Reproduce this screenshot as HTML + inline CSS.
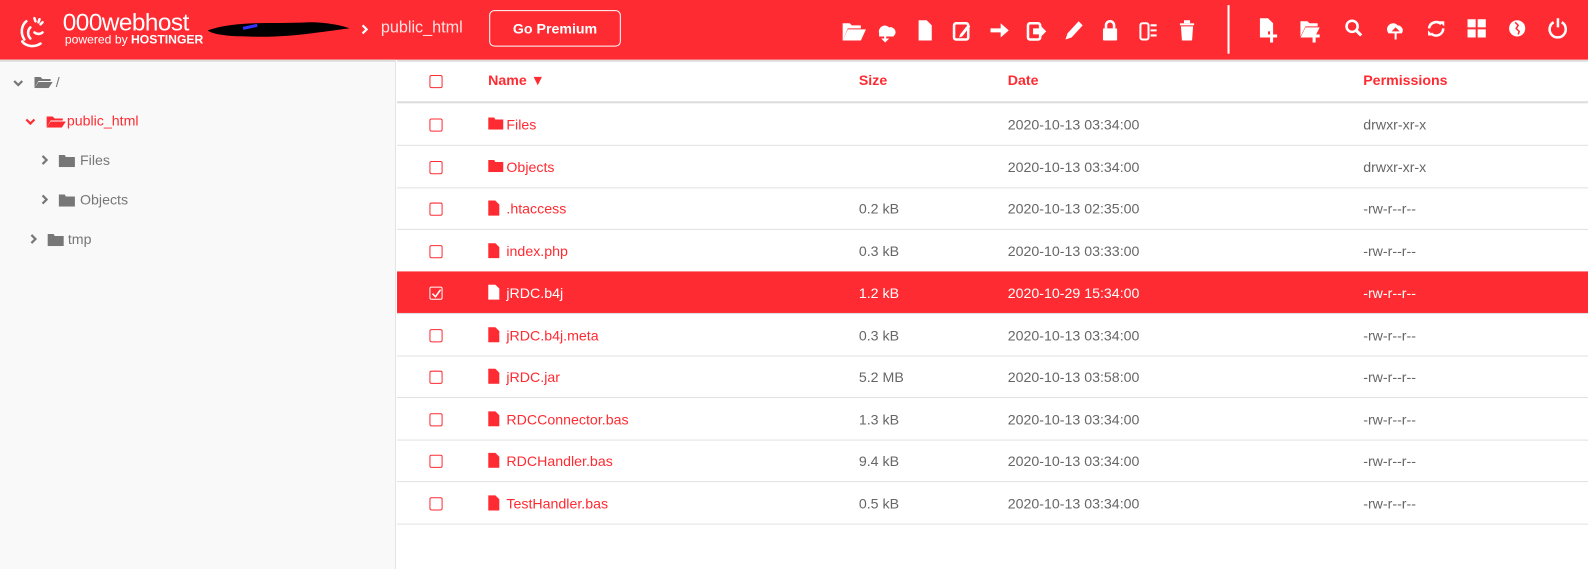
<!DOCTYPE html>
<html><head><meta charset="utf-8"><style>
*{margin:0;padding:0;box-sizing:border-box}
body{width:1588px;height:562px;overflow:hidden;background:#fff;font-family:"Liberation Sans",sans-serif;position:relative}
#w{position:absolute;left:0;top:0;width:1568px;height:555px;transform:scale(1.0128);transform-origin:0 0}
.hdr{position:absolute;left:0;top:0;width:1600px;height:59px;background:#ff2b32}
.hdr .t{position:absolute;color:#fff}
.ic{position:absolute;top:17px}
.side{position:absolute;left:0;top:59px;width:391px;height:503px;background:#f9f9f9;border-right:1px solid #e4e4e4;border-top:2px solid #ddd}
.tr{position:absolute;font-size:14px;color:#777}
.main{position:absolute;left:392px;top:59px;width:1200px;height:503px;border-top:2px solid #ddd}
.row{position:absolute;left:0;width:1200px;height:42px;border-bottom:1px solid #e2e2e2;font-size:14px;color:#666}
.row span{position:absolute;top:13px}
.cb{position:absolute;left:32px;top:15px;width:13px;height:13px;border:1px solid #ff2b32;border-radius:2px;background:#fff}
.nm{left:108px;color:#ff2b32}
.fi{position:absolute;left:90px;top:13px}
.sel{background:#ff2b32;color:#fff}
.sel span,.sel .nm{color:#fff}
.sel .cb{border-color:#fff;background:#ff2b32}
.chev{position:absolute}
</style></head><body><div id="w">
<div class="hdr">
 <svg class="ic" style="left:14px;top:13px" width="36" height="36" viewBox="0 0 36 36" fill="none" stroke="#fff" stroke-width="2.5" stroke-linecap="round"><path d="M12 8c-5 4-6 12-2 18"/><path d="M16 14c-3 3-3 8 0 11"/><path d="M8 28c4 5 12 6 18 2"/><path d="M20 19c2 2 6 2 8 0"/><path d="M20 5l1 3M25 6l-1 3M28 9l-2 2"/></svg>
 <div class="t" style="left:62px;top:9px;font-size:24px;letter-spacing:-0.5px">000webhost</div>
 <div class="t" style="left:64px;top:32px;font-size:12px">powered by <b>HOSTINGER</b></div>
 <svg style="position:absolute;left:200px;top:16px" width="150" height="28"><path d="M5 14c30-10 60-6 100-8 20 0 35 4 40 6-20 2-60 10-100 8-20 0-35-2-40-6z" fill="#000"/><path d="M40 12l14-3" stroke="#33f" stroke-width="3"/></svg>
 <svg class="chev" style="left:356px;top:23px" width="8" height="12"><path d="M2 2l4 4-4 4" stroke="#fff" stroke-width="2.2" fill="none"/></svg>
 <div class="t" style="left:376px;top:19px;font-size:16px;color:#ffe0e0">public_html</div>
 <div style="position:absolute;left:483px;top:10px;width:130px;height:36px;border:1px solid #fff;border-radius:5px;color:#fff;font-size:14px;font-weight:bold;text-align:center;line-height:34px">Go Premium</div>
 <svg style="position:absolute;left:830px;top:15px" width="370" height="28" fill="#fff">
  <path d="M2 8h7l2 2h9v3H7l-5 12z M7 14h18l-5 11H2z"/>
  <path d="M38 18a6 6 0 0 1 10-6a5 5 0 0 1 4 9H38z"/><rect x="43" y="18" width="2" height="7"/><path d="M40 23l4 4 4-4z"/>
  <path d="M77 5h8l5 5v15H77z"/>
  <rect x="112" y="8" width="14" height="16" rx="2" fill="none" stroke="#fff" stroke-width="2.5"/><path d="M118 19l8-10 2 2-8 10-3 1z"/>
  <path d="M148 13h10v-5l8 7-8 7v-5h-10z"/>
  <rect x="185" y="8" width="12" height="16" rx="2" fill="none" stroke="#fff" stroke-width="2.5"/><path d="M190 13h6v-4l7 7-7 7v-4h-6z"/>
  <path d="M222 24l2-6 11-12 4 4-11 12z"/>
  <rect x="259" y="13" width="14" height="12" rx="1"/><path d="M262 13v-3a4 4 0 0 1 8 0v3" fill="none" stroke="#fff" stroke-width="2.5"/>
  <rect x="296" y="8" width="8" height="16" rx="2" fill="none" stroke="#fff" stroke-width="2"/><path d="M306 10h6M306 15h6M306 20h6" stroke="#fff" stroke-width="2"/>
  <rect x="335" y="8" width="14" height="2"/><rect x="339" y="5" width="6" height="3"/><path d="M336 11h12l-1 14h-10z"/>
 </svg>
 <div style="position:absolute;left:1212px;top:5px;width:2px;height:48px;background:#fff"></div>
 <svg style="position:absolute;left:1240px;top:13px" width="320" height="30" fill="#fff">
  <path d="M4 5h8l5 5v8h-5v6H4z"/><rect x="14" y="17" width="3" height="12"/><rect x="10" y="21" width="11" height="3"/>
  <path d="M44 8h7l2 2h8v3H49l-5 10z M49 14h14l-5 10H44z"/><rect x="56" y="17" width="3" height="12"/><rect x="52" y="21" width="11" height="3"/>
  <circle cx="95" cy="13" r="5.5" fill="none" stroke="#fff" stroke-width="2.5"/><path d="M99 17l5 5" stroke="#fff" stroke-width="3"/>
  <path d="M131 20a6 6 0 0 1 9-8a5 5 0 0 1 4 8z"/><rect x="137" y="15" width="2" height="11"/><path d="M134 18l4-4 4 4z" fill="#ff2b32"/>
  <path d="M171 15a7 7 0 0 1 12-4M185 15a7 7 0 0 1-12 5" fill="none" stroke="#fff" stroke-width="2.5"/><path d="M181 8h5v5zM175 22h-5v-5z"/>
  <rect x="209" y="6" width="8" height="8"/><rect x="219" y="6" width="8" height="8"/><rect x="209" y="16" width="8" height="8"/><rect x="219" y="16" width="8" height="8"/>
  <circle cx="258" cy="15" r="8"/><path d="M256 9l3 3-2 3 3 3-1 3" stroke="#ff2b32" stroke-width="1.5" fill="none"/>
  <path d="M294 9a8 8 0 1 0 8 0" fill="none" stroke="#fff" stroke-width="2.5"/><rect x="297" y="5" width="2.5" height="9"/>
 </svg>
</div>
<div class="side">
 <svg class="chev" style="left:13px;top:17px" width="10" height="8"><path d="M1 2l4 4 4-4" stroke="#777" stroke-width="2.2" fill="none"/></svg>
 <svg style="position:absolute;left:34px;top:13px" width="18" height="13" fill="#777"><path d="M0 2h6l2 2h8v2H4L0 13zM4 7h14l-4 6H0z"/></svg>
 <div class="tr" style="left:55px;top:12px">/</div>
 <svg class="chev" style="left:25px;top:55px" width="10" height="8"><path d="M1 2l4 4 4-4" stroke="#ff2b32" stroke-width="2.2" fill="none"/></svg>
 <svg style="position:absolute;left:46px;top:52px" width="19" height="13" fill="#ff2b32"><path d="M0 2h6l2 2h8v2H4L0 13zM4 7h15l-4 6H0z"/></svg>
 <div class="tr" style="left:66px;top:50px;color:#ff2b32">public_html</div>
 <svg class="chev" style="left:40px;top:92px" width="8" height="10"><path d="M2 1l4 4-4 4" stroke="#777" stroke-width="2.2" fill="none"/></svg>
 <svg style="position:absolute;left:58px;top:91px" width="16" height="13" fill="#777"><path d="M0 1h6l1 2h9v10H0z"/></svg>
 <div class="tr" style="left:79px;top:89px">Files</div>
 <svg class="chev" style="left:40px;top:131px" width="8" height="10"><path d="M2 1l4 4-4 4" stroke="#777" stroke-width="2.2" fill="none"/></svg>
 <svg style="position:absolute;left:58px;top:130px" width="16" height="13" fill="#777"><path d="M0 1h6l1 2h9v10H0z"/></svg>
 <div class="tr" style="left:79px;top:128px">Objects</div>
 <svg class="chev" style="left:29px;top:170px" width="8" height="10"><path d="M2 1l4 4-4 4" stroke="#777" stroke-width="2.2" fill="none"/></svg>
 <svg style="position:absolute;left:47px;top:169px" width="16" height="13" fill="#777"><path d="M0 1h6l1 2h9v10H0z"/></svg>
 <div class="tr" style="left:67px;top:167px">tmp</div>
</div>
<div class="main">
 <div class="row" style="top:-2px;height:43px;border-bottom:2px solid #ddd;font-weight:bold"><div class="cb" style="top:15px"></div><span class="nm" style="left:90px;top:12px">Name ▼</span><span style="left:456px;top:12px;color:#ff2b32">Size</span><span style="left:603px;top:12px;color:#ff2b32">Date</span><span style="left:954px;top:12px;color:#ff2b32">Permissions</span></div>
 <div class="row" style="top:41px"><div class="cb"></div><svg class="fi" width="15" height="13" fill="#ff2b32"><path d="M0 1h6l1 2h8v10H0z"/></svg><span class="nm">Files</span><span style="left:603px">2020-10-13 03:34:00</span><span style="left:954px">drwxr-xr-x</span></div>
 <div class="row" style="top:83px"><div class="cb"></div><svg class="fi" width="15" height="13" fill="#ff2b32"><path d="M0 1h6l1 2h8v10H0z"/></svg><span class="nm">Objects</span><span style="left:603px">2020-10-13 03:34:00</span><span style="left:954px">drwxr-xr-x</span></div>
 <div class="row" style="top:124px"><div class="cb"></div><svg class="fi" width="12" height="15" fill="#ff2b32"><path d="M0 0h7l4 4v11H0z"/></svg><span class="nm">.htaccess</span><span style="left:456px">0.2 kB</span><span style="left:603px">2020-10-13 02:35:00</span><span style="left:954px">-rw-r--r--</span></div>
 <div class="row" style="top:166px"><div class="cb"></div><svg class="fi" width="12" height="15" fill="#ff2b32"><path d="M0 0h7l4 4v11H0z"/></svg><span class="nm">index.php</span><span style="left:456px">0.3 kB</span><span style="left:603px">2020-10-13 03:33:00</span><span style="left:954px">-rw-r--r--</span></div>
 <div class="row sel" style="top:207px"><div class="cb"><svg width="11" height="11" style="position:absolute;left:0;top:0"><path d="M2 6l3 3 5-7" stroke="#fff" stroke-width="1.5" fill="none"/></svg></div><svg class="fi" width="12" height="15" fill="#fff"><path d="M0 0h7l4 4v11H0z"/></svg><span class="nm">jRDC.b4j</span><span style="left:456px">1.2 kB</span><span style="left:603px">2020-10-29 15:34:00</span><span style="left:954px">-rw-r--r--</span></div>
 <div class="row" style="top:249px"><div class="cb"></div><svg class="fi" width="12" height="15" fill="#ff2b32"><path d="M0 0h7l4 4v11H0z"/></svg><span class="nm">jRDC.b4j.meta</span><span style="left:456px">0.3 kB</span><span style="left:603px">2020-10-13 03:34:00</span><span style="left:954px">-rw-r--r--</span></div>
 <div class="row" style="top:290px"><div class="cb"></div><svg class="fi" width="12" height="15" fill="#ff2b32"><path d="M0 0h7l4 4v11H0z"/></svg><span class="nm">jRDC.jar</span><span style="left:456px">5.2 MB</span><span style="left:603px">2020-10-13 03:58:00</span><span style="left:954px">-rw-r--r--</span></div>
 <div class="row" style="top:332px"><div class="cb"></div><svg class="fi" width="12" height="15" fill="#ff2b32"><path d="M0 0h7l4 4v11H0z"/></svg><span class="nm">RDCConnector.bas</span><span style="left:456px">1.3 kB</span><span style="left:603px">2020-10-13 03:34:00</span><span style="left:954px">-rw-r--r--</span></div>
 <div class="row" style="top:373px"><div class="cb"></div><svg class="fi" width="12" height="15" fill="#ff2b32"><path d="M0 0h7l4 4v11H0z"/></svg><span class="nm">RDCHandler.bas</span><span style="left:456px">9.4 kB</span><span style="left:603px">2020-10-13 03:34:00</span><span style="left:954px">-rw-r--r--</span></div>
 <div class="row" style="top:415px"><div class="cb"></div><svg class="fi" width="12" height="15" fill="#ff2b32"><path d="M0 0h7l4 4v11H0z"/></svg><span class="nm">TestHandler.bas</span><span style="left:456px">0.5 kB</span><span style="left:603px">2020-10-13 03:34:00</span><span style="left:954px">-rw-r--r--</span></div>
</div>
</div></body></html>
